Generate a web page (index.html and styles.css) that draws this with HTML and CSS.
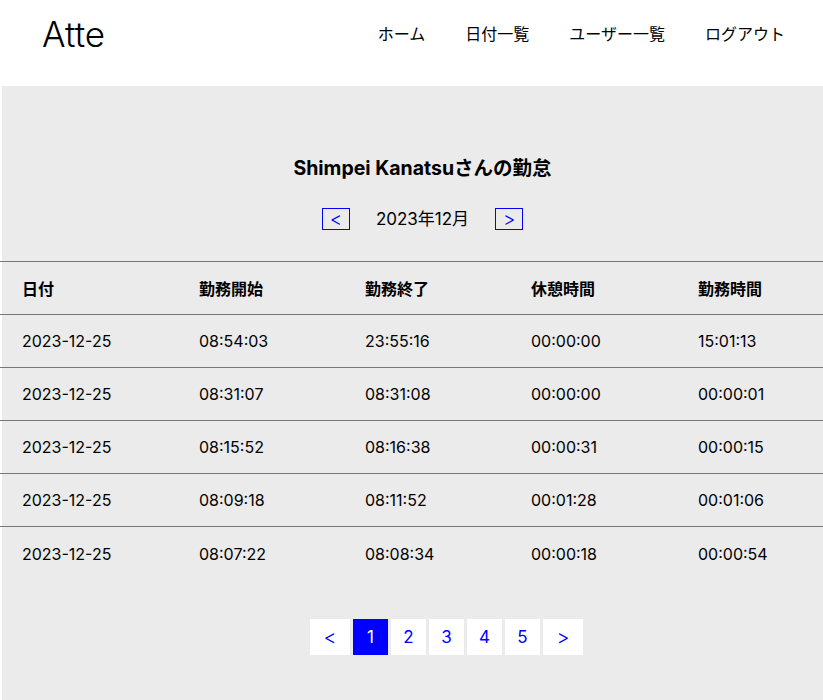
FILE: index.html
```html
<!DOCTYPE html>
<html lang="ja">
<head>
<meta charset="utf-8">
<title>Atte</title>
<link rel="stylesheet" href="styles.css">
</head>
<body>
<header class="header">
  <h1 class="logo">Atte</h1>
  <nav class="nav">
    <a class="nav-link" href="#">ホーム</a>
    <a class="nav-link" href="#">日付一覧</a>
    <a class="nav-link" href="#">ユーザー一覧</a>
    <a class="nav-link" href="#">ログアウト</a>
  </nav>
</header>
<main class="main">
  <h2 class="title">Shimpei Kanatsuさんの勤怠</h2>
  <div class="month-nav">
    <a class="month-btn" href="#">&lt;</a>
    <span class="month-label">2023年12月</span>
    <a class="month-btn" href="#">&gt;</a>
  </div>
  <div class="table">
    <div class="row head">
      <span>日付</span><span>勤務開始</span><span>勤務終了</span><span>休憩時間</span><span>勤務時間</span>
    </div>
    <div class="row">
      <span>2023-12-25</span><span>08:54:03</span><span>23:55:16</span><span>00:00:00</span><span>15:01:13</span>
    </div>
    <div class="row">
      <span>2023-12-25</span><span>08:31:07</span><span>08:31:08</span><span>00:00:00</span><span>00:00:01</span>
    </div>
    <div class="row">
      <span>2023-12-25</span><span>08:15:52</span><span>08:16:38</span><span>00:00:31</span><span>00:00:15</span>
    </div>
    <div class="row">
      <span>2023-12-25</span><span>08:09:18</span><span>08:11:52</span><span>00:01:28</span><span>00:01:06</span>
    </div>
    <div class="row last">
      <span>2023-12-25</span><span>08:07:22</span><span>08:08:34</span><span>00:00:18</span><span>00:00:54</span>
    </div>
  </div>
  <nav class="pager">
    <a class="page wide" href="#">&lt;</a>
    <a class="page active" href="#">1</a>
    <a class="page" href="#">2</a>
    <a class="page" href="#">3</a>
    <a class="page" href="#">4</a>
    <a class="page" href="#">5</a>
    <a class="page wide" href="#">&gt;</a>
  </nav>
</main>
</body>
</html>
```

FILE: styles.css
```css
* { box-sizing: border-box; }
html, body { margin: 0; padding: 0; background: #fff; }
body {
  font-family: Inter, "Noto Sans CJK JP", sans-serif;
  color: #000;
}
a { text-decoration: none; }

.header {
  height: 86px;
  display: flex;
  align-items: flex-start;
  justify-content: space-between;
  padding: 13px 38px 0 42px;
}
.logo {
  margin: 0;
  font-size: 35px;
  font-weight: 300;
  line-height: 42px;
}
.nav {
  display: flex;
  gap: 40px;
  padding-top: 10px;
}
.nav-link {
  color: #000;
  font-size: 16px;
  line-height: 22px;
}

.main {
  margin-left: 2px;
  background: #ebebeb;
  min-height: 614px;
  padding-top: 50px;
  padding-bottom: 45px;
}
.title {
  margin: 0;
  padding-left: 20px;
  text-align: center;
  font-size: 19.5px;
  font-weight: 700;
  line-height: 64px;
}
.month-nav {
  display: flex;
  justify-content: center;
  align-items: center;
  gap: 26px;
  margin-top: 8px;
  margin-bottom: 31px;
  padding-left: 20px;
}
.month-btn {
  width: 28px;
  height: 22px;
  border: 1px solid #00f;
  color: #00f;
  font-size: 19px;
  font-weight: 300;
  display: flex;
  align-items: center;
  justify-content: center;
  line-height: 1;
}
.month-label { font-size: 17px; line-height: 22px; }

.table { border-top: 1px solid #777; margin-left: -2px; }
.row {
  display: grid;
  grid-template-columns: 177px 166px 166px 167px 1fr;
  padding-left: 22px;
  height: 53px;
  align-items: center;
  border-bottom: 1px solid #777;
  font-size: 16px;
}
.row.last { border-bottom: none; }
.row.head { font-size: 16px; font-weight: 700; }

.pager {
  display: flex;
  justify-content: center;
  gap: 3px;
  margin-top: 39px;
  padding-left: 68px;
}
.page {
  width: 35px;
  height: 36px;
  background: #fff;
  color: #00f;
  font-size: 17px;
  display: flex;
  align-items: center;
  justify-content: center;
}
.page.wide { width: 40px; font-weight: 300; font-size: 20px; }
.page.active { background: #00f; color: #fff; }
```
